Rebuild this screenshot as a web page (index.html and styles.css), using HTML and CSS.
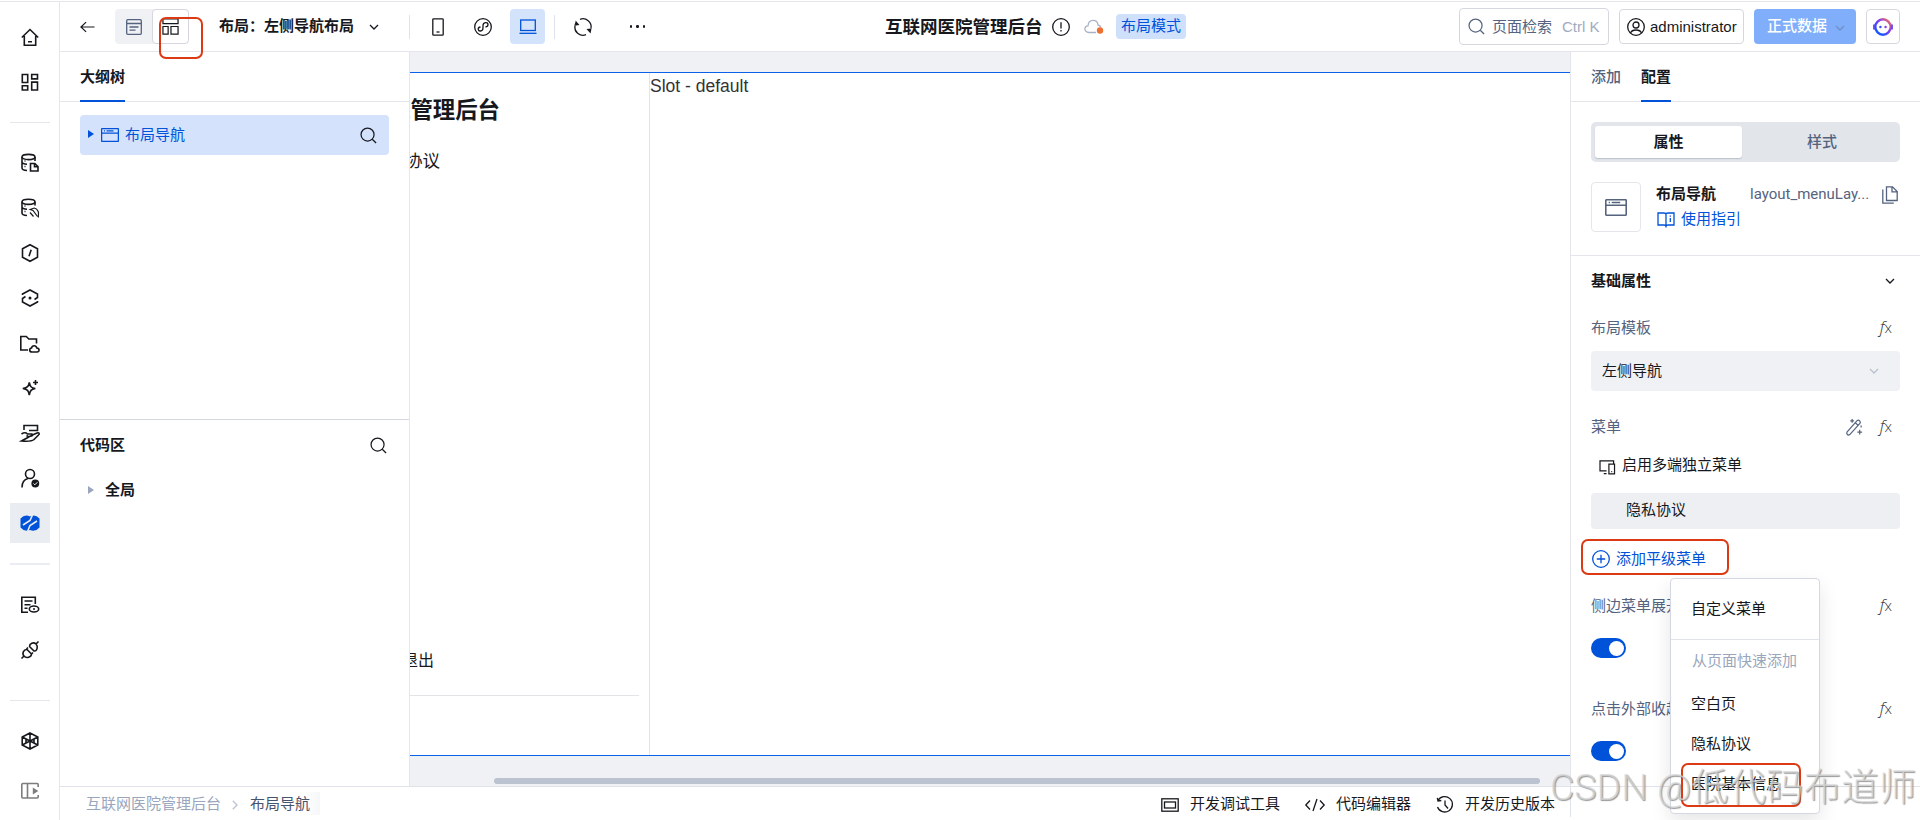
FILE: index.html
```
<!DOCTYPE html>
<html lang="zh-CN">
<head>
    <meta charset="UTF-8">
    <title>互联网医院管理后台</title>
    <link rel="stylesheet" href="styles.css">
</head>
<body>
    <svg class="defs">
        <symbol id="search" viewBox="0 0 18 18"><circle cx="8" cy="8" r="6.9"/><path d="M13 13l4 4"/></symbol>
        <symbol id="down" viewBox="0 0 10 6"><path d="M1 1l4 4 4-4"/></symbol>
        <symbol id="window" viewBox="0 0 18 14"><rect x=".6" y=".6" width="16.8" height="12.8" rx=".6"/><path d="M.6 5.2h16.8M3 2.9h1M5.5 2.9h7"/></symbol>
    </svg>

    <div class="app">
        <div class="sidebar">
            <a class="nav"><svg viewBox="0 0 20 20"><path d="M1.800 10.500L10 2.500l8.200 8M4.300 9v9.300h11.400V9M8 14.700h4"/></svg></a>
            <a class="nav"><svg viewBox="0 0 20 20"><path d="M2.300 2.500h5.400v8H2.300zM11.700 2.500h5.800v4.400h-5.800zM2.300 13.700h5.400V18H2.300zM11.700 10.100h5.800V18h-5.800z"/></svg></a>
            <div class="line"></div>
            <a class="nav"><svg viewBox="0 0 20 20"><ellipse cx="8.500" cy="4" rx="6.500" ry="2.600"/><path d="M2 4v11c0 1.500 2 2.300 5 2.500M15 4v4M2 9.300c.5 1.200 2.500 1.800 5 1.900M4.500 8h1M4.500 13.500h1M10.500 10.500h4.300l3.200 3v4.500h-7.500zM14.500 10.500v3.200H18"/></svg></a>
            <a class="nav"><svg viewBox="0 0 20 20"><ellipse cx="8.500" cy="3.800" rx="6.500" ry="2.600"/><path d="M2 4v11c0 1.500 2 2.300 5 2.500M15 4v3.500M2 9.300c.5 1.200 2.500 1.800 5 1.900M4.500 8h1M4.500 13.500h1"/><path class="thin" d="M18.500 19.500c-.5-1.500.5-4-.3-6s-1.700-3-4-3.500l-4 1.500 2.800 1 4.500 6M10 14.500l3.500 4"/></svg></a>
            <a class="nav"><svg viewBox="0 0 20 20"><path d="M10 1.700l7.500 4v8.600l-7.500 4-7.500-4V5.700zM11.200 6.800l-2.200 6.400"/></svg></a>
            <a class="nav"><svg viewBox="0 0 20 20"><path d="M2.500 7V6l7.500-4 7.500 4v3.500l-3 2M17.500 13v1L10 18l-7.500-4v-3.500l3-2"/><circle cx="10" cy="10" r="1.500" class="solid"/></svg></a>
            <a class="nav"><svg viewBox="0 0 20 20"><path d="M8 17H.8V3.500h5.500L8.800 6h7.700v4.500M12 19c-3 0-3-3.700-.5-4 .6-3 4.700-3 5.300 0 3 .3 3 4 .2 4z"/></svg></a>
            <a class="nav"><svg viewBox="0 0 20 20"><path d="M9.300 4.500c.8 4 1.800 5.200 6 6-4.200.8-5.200 2-6 6.500-.8-4.500-1.800-5.700-6.500-6.500 4.700-.8 5.700-2 6.500-6zM15.500 2v5M13 4.500h5"/></svg></a>
            <a class="nav"><svg viewBox="0 0 20 20"><path d="M4 7V2.500h13.500v5H9M1.500 11c3-2 4.500-1.500 6 0H12c1.500 1.500 0 2.500-4 2.500l-1.500-1M12.500 12l4.500-2c2-.8 3 .8 1.500 2L14 16.500c-1.500 1.500-6 2-12.500 1.500z"/></svg></a>
            <a class="nav"><svg viewBox="0 0 20 20"><circle cx="10" cy="6" r="4.500"/><path d="M2 19.500c0-5 2-8 6-9"/><circle cx="15.300" cy="15.500" r="3.900" class="solid"/><path class="tick" d="M13.500 15.500l1.300 1.300 2.500-2.500"/></svg></a>
            <a class="nav active"><svg viewBox="0 0 20 20"><path class="solid" d="M.5 5.500Q5 .5 10 3.500 15 .5 19.500 5.500v9Q15 19.500 10 17 5 19.500.5 14.500z"/><path class="cut" d="M12.500 2L10 7.500 3 12M7.500 18.500l2.500-6L17 8"/></svg></a>
            <div class="line thick"></div>
            <a class="nav"><svg viewBox="0 0 20 20"><path d="M8 17.200H1.800V2.300h13.500V9M4.500 6h8M4.500 9.700h6M4.500 13.300h3"/><ellipse cx="14" cy="14" rx="4.700" ry="3"/><circle cx="14" cy="14" r="1" class="solid"/></svg></a>
            <a class="nav last"><svg viewBox="0 0 20 20"><path d="M1.500 18.500l2.500-2.500M18.500 1.500L16 4M4 16c-2.500-2.500 0-7 3-6.500l4.500 4.500c0 3-5 5-7.500 2zM16 4c-2.500-2.500-6.500-.5-6.500 2.500L14 11c3 .5 4.500-4.500 2-7zM6.500 9L8 7.500M11.500 14l1.500-1.500"/></svg></a>
            <div class="line"></div>
            <a class="nav cube"><svg viewBox="0 0 20 20"><path d="M10 2l7.800 4v8L10 18l-7.800-4V6zM10 2v16M2.200 6L10 10l7.800-4M2.200 14L10 10l7.800 4M6 8.500v3M14 8.500v3"/></svg></a>
            <a class="nav fold"><svg viewBox="0 0 20 20"><path d="M18.200 6V3.500q0-1-1-1H2.800q-1 0-1 1v12.500q0 1 1 1h14.400q1 0 1-1V14M7.500 2.500V17"/><path class="solid" d="M12.800 6.500l5.500 3.500-5.500 3.500z"/></svg></a>
        </div>

        <div class="main">
            <div class="header">
                <svg class="icon back" viewBox="0 0 16 12"><path d="M15.500 6H1M6.500.8L1 6l5.500 5.200"/></svg>
                <div class="modes">
                    <div class="mode"><svg class="icon" viewBox="0 0 16 16"><rect x=".7" y=".7" width="14.600" height="14.600" rx="1"/><path d="M.7 4.500h14.600M3.500 8h9M3.500 11.200h6"/></svg></div>
                    <div class="mode on"><svg class="icon" viewBox="0 0 18 18"><path d="M1 1h16v5H1zM1 9h5.500v8H1zM9.500 9H17v8H9.500z"/></svg></div>
                </div>
                <span class="layout-name">布局：左侧导航布局</span>
                <svg class="icon arrow"><use href="#down"/></svg>
                <i class="sep"></i>
                <svg class="icon phone" viewBox="0 0 12 18"><rect x=".8" y=".8" width="10.400" height="16.400" rx=".8"/><path d="M4.500 14h3"/></svg>
                <svg class="icon mini" viewBox="0 0 18 18"><circle cx="9" cy="9" r="8.300"/><path d="M6.500 9C3 9.500 4 13.300 6.500 13 8.500 12.800 9 11.500 9 10V7.500c0-3.500 5-4 5-1 0 1.500-1 2.300-2.500 2.500"/></svg>
                <div class="pc"><svg class="icon" viewBox="0 0 18 16"><rect x="1.700" y="1" width="14.600" height="10.500"/><path d="M.5 14.300h17"/></svg></div>
                <i class="sep"></i>
                <svg class="icon refresh" viewBox="0 0 18 18"><path d="M6 1.300a8.200 8.200 0 0 1 11 9.200M12 16.700A8.200 8.200 0 0 1 .9 8M3.500 15A8.200 8.200 0 0 1 2.500 4"/><path class="solid" d="M1.500 2.500L5.500 7 2 7.500zM16.500 15.500l-4-4.500 5-.5z"/></svg>
                <div class="dots"><b></b><b></b><b></b></div>
                <span class="app-name">互联网医院管理后台</span>
                <svg class="icon info" viewBox="0 0 18 18"><circle cx="9" cy="9" r="8.300"/><path d="M9 4.200v6.300M9 12v1.600"/></svg>
                <svg class="icon cloud" viewBox="0 0 20 16"><path d="M12 13.500H5C-.5 13 0 7 4 6.800 4.500-.5 13.500 0 14 6c1.500.3 2.500 1 2.800 2.300"/><circle cx="16" cy="11.500" r="3.200"/></svg>
                <span class="badge">布局模式</span>
                <div class="search-box"><svg class="icon"><use href="#search"/></svg><span>页面检索</span><em>Ctrl K</em></div>
                <div class="user"><svg class="icon" viewBox="0 0 18 18"><circle cx="9" cy="9" r="8.300"/><circle cx="9" cy="7" r="3"/><path d="M3.500 15c1.500-4 9.500-4 11 0"/></svg><span>administrator</span></div>
                <div class="data-btn"><span>正式数据</span><svg class="icon"><use href="#down"/></svg></div>
                <div class="bot"><svg viewBox="0 0 20 20"><defs><linearGradient id="g" x1="0" y1="1" x2="1" y2="0"><stop offset="0.200" stop-color="#1a56ff"/><stop offset="0.600" stop-color="#8a3df0"/><stop offset="1" stop-color="#ff7a3a"/></linearGradient></defs><circle cx="10" cy="10" r="7.700" stroke="url(#g)" stroke-width="2.400" fill="none"/><path d="M1 7.500v5M19 7.500v5" stroke="#5b45f5" stroke-width="1.800"/><circle cx="7.400" cy="10" r="1.200" fill="#3b4df5"/><circle cx="12.600" cy="10" r="1.200" fill="#8a3df0"/></svg></div>
            </div>

            <div class="body">
                <div class="left">
                    <div class="tabs"><span class="tab on">大纲树</span></div>
                    <div class="tree">
                        <div class="tree-row">
                            <i class="caret"></i>
                            <svg class="icon win"><use href="#window"/></svg>
                            <span>布局导航</span>
                            <svg class="icon find"><use href="#search"/></svg>
                        </div>
                    </div>
                    <div class="code">
                        <div class="code-head"><span>代码区</span><svg class="icon find"><use href="#search"/></svg></div>
                        <div class="code-row"><i class="caret"></i><span>全局</span></div>
                    </div>
                </div>

                <div class="canvas">
                    <div class="page">
                        <div class="page-menu">
                            <div class="page-title">互联网医院管理后台</div>
                            <div class="page-item">隐私协议</div>
                            <div class="page-exit">退出</div>
                            <div class="page-foot"></div>
                        </div>
                        <div class="slot">Slot - default</div>
                    </div>
                    <div class="scrollbar"></div>
                </div>

                <div class="right">
                    <div class="tabs"><span class="tab">添加</span><span class="tab on">配置</span></div>
                    <div class="config">
                        <div class="segment"><span class="on">属性</span><span class="off">样式</span></div>
                        <div class="comp">
                            <div class="comp-icon"><svg class="icon"><use href="#window"/></svg></div>
                            <div class="comp-info">
                                <div class="comp-top"><b>布局导航</b><span>layout_menuLay...</span><svg class="icon" viewBox="0 0 16 18"><path d="M4.500.8h6l4.700 4.700v9H4.500zM10 .8v5h5.200M.8 3.500v13.700h11"/></svg></div>
                                <div class="guide"><svg class="icon" viewBox="0 0 18 16"><path d="M1 1h6q2 0 2 1.500Q9 1 11 1h6v12h-6q-2 0-2 1.500Q9 13 7 13H1zM9 2.500v13M13.300 6v4M13.300 3.500v1.200"/></svg><span>使用指引</span></div>
                            </div>
                        </div>
                    </div>
                    <div class="props">
                        <div class="group"><span>基础属性</span><svg class="icon arrow"><use href="#down"/></svg></div>
                        <div class="field"><span>布局模板</span><i class="fx">f<small>x</small></i></div>
                        <div class="select"><span>左侧导航</span><svg class="icon arrow"><use href="#down"/></svg></div>
                        <div class="field menu-field"><span>菜单</span><svg class="icon wand" viewBox="0 0 18 18"><path d="M1 14.500L11.500 2.500q1.500-1.500 3 0t0 3L4 17q-1.500 1-2.500 0t-.5-2.500zM10 4.500l3 3M6.500.5v4M4.500 2.500h4M14.500 12v5M12 14.500h5M16 7.500v2"/></svg><i class="fx">f<small>x</small></i></div>
                        <div class="multi"><svg class="icon" viewBox="0 0 18 16"><path d="M8 11.500H1V1h14.500v3M5 14.500h3M10.500 4.500h6v10.300h-6zM13 12.300h1"/></svg><span>启用多端独立菜单</span></div>
                        <div class="menu-item">隐私协议</div>
                        <div class="add"><svg class="icon" viewBox="0 0 18 18"><circle cx="9" cy="9" r="8.300"/><path d="M9 4.800v8.400M4.800 9h8.400"/></svg><span>添加平级菜单</span></div>
                        <div class="field"><span>侧边菜单展开</span><i class="fx">f<small>x</small></i></div>
                        <div class="switch"></div>
                        <div class="field"><span>点击外部收起</span><i class="fx">f<small>x</small></i></div>
                        <div class="switch"></div>
                    </div>
                </div>
            </div>

            <div class="footer">
                <span class="crumb">互联网医院管理后台</span>
                <svg class="icon next" viewBox="0 0 6 10"><path d="M.8.8L5 5 .8 9.200"/></svg>
                <span class="crumb now">布局导航</span>
                <div class="tools">
                    <div class="tool"><svg class="icon" viewBox="0 0 18 14"><rect x=".8" y=".8" width="16.400" height="12.400"/><rect x="3.500" y="4" width="11" height="6"/></svg><span>开发调试工具</span></div>
                    <div class="tool"><svg class="icon wide" viewBox="0 0 20 14"><path d="M5 2.500L.8 7 5 11.500M15 2.500L19.200 7 15 11.500M12 1L8 13"/></svg><span>代码编辑器</span></div>
                    <div class="tool"><svg class="icon" viewBox="0 0 18 18"><path d="M2 4.500A7.700 7.700 0 1 1 1.500 11M1.300 1.800L2 5l3.300-.5M9 4.500V9l3 3.500"/></svg><span>开发历史版本</span></div>
                </div>
            </div>
        </div>
    </div>

    <div class="popup">
        <div class="popup-item first">自定义菜单</div>
        <div class="popup-label">从页面快速添加</div>
        <div class="popup-item">空白页</div>
        <div class="popup-item">隐私协议</div>
        <div class="popup-item">医院基本信息</div>
    </div>

    <div class="mark mark-layout"></div>
    <div class="mark mark-add"></div>
    <div class="mark mark-page"></div>
    <div class="watermark">CSDN @低代码布道师</div>
</body>
</html>
```
FILE: styles.css
```
* { box-sizing: border-box; }
body { margin: 0; width: 1920px; height: 820px; overflow: hidden; background: #fff; color: #16181d; font: 15px/20px Roboto, "Noto Sans CJK SC", sans-serif; white-space: nowrap; }
svg { display: block; flex: none; fill: none; stroke: currentColor; stroke-width: 1.3; overflow: visible; }
i, em { font-style: normal; }
.defs { position: absolute; width: 0; height: 0; }
.solid { fill: currentColor; stroke: none; }

.app { display: flex; height: 820px; padding-top: 1px; }

/* left icon bar */
.sidebar { width: 60px; height: 819px; padding-top: 15px; border-right: 1px solid #e4e6eb; border-top: 1px solid #e4e6eb; display: flex; flex-direction: column; align-items: center; flex: none; }
.nav { width: 40px; height: 40px; margin-bottom: 5px; display: flex; align-items: center; justify-content: center; flex: none; }
.nav svg { width: 20px; height: 20px; stroke-width: 1.6; }
.nav .solid { stroke: none; }
.nav .thin { stroke-width: 1.2; }
.nav .tick { stroke: #fff; stroke-width: 1; }
.nav .cut { stroke: #e9ecf1; stroke-width: 1.6; }
.nav.active { background: #e9ecf1; color: #0052d9; }
.line { width: 40px; height: 1px; margin: 15px 0 20px; background: #e4e7ec; flex: none; }
.line.thick { height: 2px; background: #e9ecf1; }
.nav.last { margin-bottom: 15px; }
.nav.cube { margin-bottom: 10px; }
.nav.fold { color: #7d7d7d; }

.main { flex: 1; min-width: 0; display: flex; flex-direction: column; }
.header { height: 51px; border-top: 1px solid #e4e6eb; border-bottom: 1px solid #e4e6eb; display: flex; align-items: center; padding: 0 20px; }
.back { width: 15px; height: 12px; margin-right: 20px; }
.modes { display: flex; height: 35px; width: 74px; border-radius: 4px; background: #f0f1f5; }
.mode { width: 37px; display: flex; align-items: center; justify-content: center; color: #55637f; }
.mode svg { width: 16px; height: 16px; }
.mode.on { background: #fff; border: 1px solid #d5d8e0; border-radius: 4px; color: #16181d; }
.mode.on svg { width: 17px; height: 17px; }
.layout-name { margin-left: 30px; width: 135px; padding-bottom: 2px; font-weight: bold; }
.arrow { width: 10px; height: 6px; }
.layout-name + .arrow { margin: 0 30px 0 15px; }
.sep { width: 1px; height: 24px; background: #dfe2e8; flex: none; }
.phone { width: 12px; height: 18px; margin: 0 30px 0 22px; }
.mini { width: 18px; height: 18px; margin-right: 18px; }
.pc { width: 35px; height: 35px; margin-right: 9px; border-radius: 4px; background: #d4e3fc; color: #0052d9; display: flex; align-items: center; justify-content: center; }
.pc svg { width: 18px; height: 16px; }
.refresh { width: 18px; height: 18px; margin: 0 38px 0 19px; }
.dots { display: flex; gap: 4px; width: 15px; }
.dots b { width: 2.5px; height: 2.5px; border-radius: 50%; background: #16181d; }
.app-name { margin-left: 240px; width: 158px; font-size: 17.5px; font-weight: bold; }
.info { width: 18px; height: 18px; margin-left: 9px; }
.cloud { width: 20px; height: 16px; margin-left: 14px; color: #a9b3c6; }
.cloud circle { fill: #ed7030; stroke: none; }
.badge { width: 70px; height: 25px; margin-left: 12px; border-radius: 4px; background: #cfe0fa; color: #0052d9; text-align: center; line-height: 24px; }
.search-box { width: 150px; height: 37px; margin-left: 273px; padding-left: 8px; border: 1px solid #d5d8e0; border-radius: 4px; display: flex; align-items: center; color: #55637f; }
.search-box svg { width: 17px; height: 17px; margin-right: 7px; }
.search-box em { margin-left: 10px; color: #a0abc0; font-family: "Liberation Sans", sans-serif; }
.user { width: 125px; height: 35px; margin-left: 10px; padding-left: 7px; border: 1px solid #d5d8e0; border-radius: 4px; display: flex; align-items: center; gap: 5px; font-family: "Liberation Sans", sans-serif; }
.user svg { width: 18px; height: 18px; }
.data-btn { width: 102px; height: 35px; margin-left: 10px; padding-left: 13px; border-radius: 4px; background: #80aefa; color: #fff; display: flex; align-items: center; font-weight: 500; line-height: 18px; padding-bottom: 2px; }
.data-btn svg { width: 10px; height: 6px; margin: 4px 0 0 8px; color: #6d8fc8; }
.bot { width: 34px; height: 35px; margin-left: 10px; border: 1px solid #d5d8e0; border-radius: 4px; display: flex; align-items: center; justify-content: center; }
.bot svg { width: 20px; height: 20px; stroke: none; }

.body { height: 734px; display: flex; }
.tabs { height: 50px; padding-left: 20px; border-bottom: 1px solid #e4e6eb; display: flex; gap: 20px; }
.tab { height: 50px; line-height: 50px; font-weight: 500; color: #55637f; }
.tab.on { border-bottom: 2px solid #0052d9; color: #16181d; font-weight: bold; }

/* outline tree and code area */
.left { width: 350px; border-right: 1px solid #e4e6eb; flex: none; }
.tree { height: 317px; padding: 13px 20px; }
.tree-row { height: 40px; padding: 0 12px 0 8px; border-radius: 4px; background: #d4e2fc; color: #0052d9; display: flex; align-items: center; line-height: 38px; }
.caret { border-left: 6px solid #0052d9; border-top: 4px solid transparent; border-bottom: 4px solid transparent; margin-bottom: 3px; }
.tree-row .win { width: 18px; height: 14px; margin: 0 6px 0 7px; }
.find { width: 17px; height: 17px; margin-left: auto; color: #16181d; }
.code { border-top: 1px solid #d3d7e0; padding: 5px 22px 0 20px; }
.code-head { height: 40px; display: flex; align-items: center; font-weight: bold; }
.code-row { height: 50px; padding-left: 8px; display: flex; align-items: center; gap: 11px; font-weight: bold; }
.code-row .caret { border-left-color: #9aa6bd; margin: 0; }

/* preview canvas */
.canvas { width: 1160px; background: #f0f1f5; padding-top: 20px; overflow: hidden; flex: none; }
.page { height: 684px; margin-left: -80px; border-top: 1px solid #0a62e8; border-bottom: 1px solid #0a62e8; background: #fff; display: flex; font-family: "Liberation Sans", "Noto Sans CJK SC", sans-serif; }
.page-menu { width: 320px; border-right: 1px solid #e3e4e7; padding-right: 10px; display: flex; flex-direction: column; flex: none; }
.page-title { width: 170px; height: 75px; line-height: 76px; font-size: 22.4px; font-weight: bold; direction: rtl; }
.page-item { width: 110px; height: 26px; line-height: 26px; font-size: 17.5px; direction: rtl; }
.page-exit { width: 104px; margin-top: auto; height: 44px; font-size: 16px; line-height: 20px; text-align: right; }
.page-foot { height: 60px; border-top: 1px solid #e3e4e7; }
.slot { padding: 3px 0 0; font-size: 17.5px; color: #333; }
.scrollbar { width: 1046px; height: 6px; margin: 22px 0 0 84px; border-radius: 3px; background: #bac3cf; }

/* settings panel */
.right { width: 350px; border-left: 1px solid #e4e6eb; flex: none; overflow: hidden; }
.config { height: 154px; padding: 20px 20px 0; border-bottom: 1px solid #e4e6eb; }
.segment { height: 40px; padding: 4px; border-radius: 5px; background: #e2e5e9; display: flex; text-align: center; font-weight: 500; color: #55637f; line-height: 32px; }
.segment .off { flex: 1; padding-left: 6px; }
.segment .on { flex: 0 0 147px; border-radius: 3px; background: #fff; color: #16181d; box-shadow: 0 1px 1px #b9c2ce; font-weight: bold; }
.comp { display: flex; margin-top: 20px; }
.comp-icon { width: 50px; height: 50px; border: 1px solid #e4e6eb; border-radius: 4px; color: #55637f; display: flex; align-items: center; justify-content: center; }
.comp-icon svg { width: 22px; height: 17px; }
.comp-info { margin-left: 15px; flex: 1; }
.comp-top { display: flex; height: 24px; align-items: center; color: #55637f; }
.comp-top b { width: 94px; color: #16181d; }
.comp-top svg { width: 16px; height: 18px; margin: 2px 2px 0 auto; }
.guide { display: flex; align-items: center; height: 25px; gap: 6px; color: #0052d9; padding-left: 1px; }
.guide svg { width: 18px; height: 16px; margin-top: 3px; }
.props { padding: 0 20px; }
.group { height: 49px; display: flex; align-items: center; justify-content: space-between; font-weight: bold; padding-right: 5px; }
.field { height: 46px; display: flex; align-items: center; color: #55637f; padding-right: 8px; }
.fx { margin-left: auto; padding-bottom: 3px; font: italic 17px/20px "Open Sans", "Noto Sans", sans-serif; font-weight: 300; color: #30333a; }
.fx small { font-size: 15px; font-style: normal; }
.select { height: 40px; padding: 0 21px 0 11px; border-radius: 4px; background: #f0f1f5; display: flex; align-items: center; justify-content: space-between; line-height: 36px; }
.select .arrow { color: #b9c0cc; }
.menu-field { height: 56px; margin-top: 8px; }
.wand { width: 17px; height: 18px; margin-left: auto; }
.wand + .fx { margin-left: 17px; }
.multi { height: 36px; margin-top: -8px; padding-left: 8px; display: flex; align-items: center; gap: 6px; line-height: 34px; }
.multi svg { width: 17px; height: 15px; margin-top: 4px; }
.menu-item { height: 36px; margin-top: 10px; padding-left: 35px; border-radius: 4px; background: #eeeff3; line-height: 35px; }
.add { height: 54px; margin-top: 3px; padding-left: 1px; display: flex; align-items: center; gap: 6px; color: #0052d9; }
.add svg { width: 18px; height: 18px; }
.add + .field { margin-top: -3px; }
.switch { width: 35px; height: 20px; margin: 9px 0 28px; padding: 3px 2px; border-radius: 10px; background: #0052d9; display: flex; justify-content: flex-end; }
.switch::after { content: ""; width: 15px; height: 15px; border-radius: 50%; background: #fff; }

.footer { height: 34px; border-top: 1px solid #e0e3ea; padding-left: 26px; display: flex; align-items: flex-start; line-height: 34px; }
.crumb { color: #9aa6bd; }
.crumb.now { width: 70px; color: #46536e; height: 23px; margin-top: 5px; line-height: 24px; background: linear-gradient(to right, #fff 75%, #f6f7f9); }
.next { width: 6px; height: 10px; margin: 13px 12px 0 11px; color: #b9c2d2; }
.tools { width: 410px; height: 30px; margin-left: auto; border-right: 1px solid #dfe2ea; display: flex; margin-right: 349px; gap: 25px; }
.tool { display: flex; gap: 11px; }
.tool svg { width: 18px; height: 18px; margin-top: 9px; }
.tool .wide { width: 20px; }

.popup { position: absolute; left: 1670px; top: 578px; width: 150px; height: 236px; border: 1px solid #d3d8e3; border-radius: 4px; background: #fff; box-shadow: 0 8px 20px rgba(0,0,0,0.1); }
.popup-item { height: 40px; padding-left: 20px; line-height: 40px; }
.popup-item.first { height: 61px; line-height: 61px; border-bottom: 1px solid #e0e3e8; }
.popup-label { height: 44px; padding-left: 21px; line-height: 43px; color: #9aa6bd; }

.mark { position: absolute; border: 2px solid #dc3a14; border-radius: 7px; }
.mark-layout { left: 159px; top: 17px; width: 44px; height: 42px; }
.mark-add { left: 1581px; top: 539px; width: 148px; height: 36px; }
.mark-page { left: 1681px; top: 763px; width: 120px; height: 44px; }
.watermark { position: absolute; left: 1550px; top: 762px; font: 300 37.5px/50px Roboto, "Noto Sans CJK SC", sans-serif; color: rgba(215,215,215,0.75); text-shadow: 1px 1px 1px rgba(110,110,110,0.7); }
```
